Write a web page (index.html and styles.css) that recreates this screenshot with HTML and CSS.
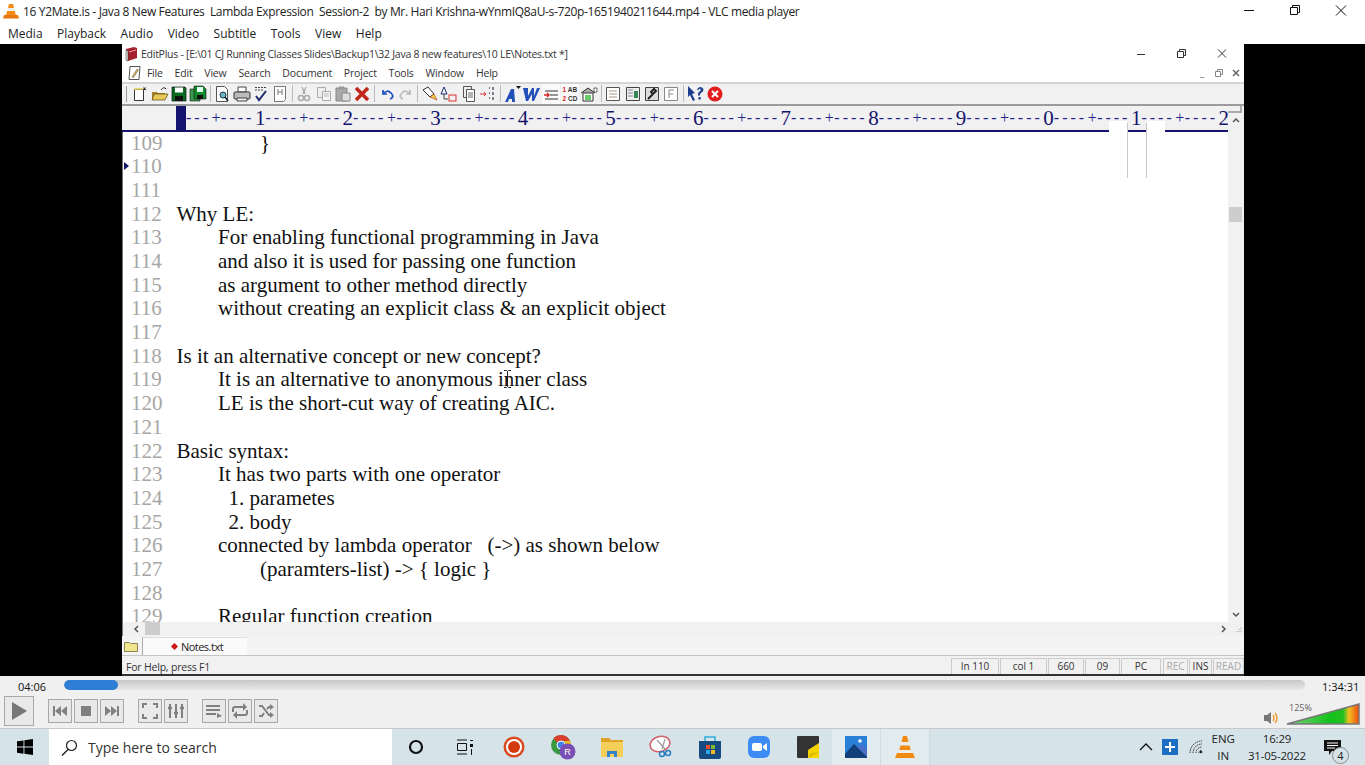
FILE: index.html
```html
<!DOCTYPE html>
<html lang="en">
<head>
<meta charset="UTF-8">
<meta name="viewport" content="width=device-width,initial-scale=1">
<title>VLC media player</title>
<link rel="stylesheet" href="styles.css">
</head>
<body>
<header class="vlc-title">
  <svg class="vlc-cone" width="16" height="16" viewBox="0 0 16 16"><path d="M6 1h4l1 4H5z" fill="#f28c13"/><path d="M5 5h6l.8 3H4.200z" fill="#eee"/><path d="M4.200 8h7.600l1 4H3.200z" fill="#f28c13"/><path d="M1 12h14l1 3.500H0z" fill="#e9780c"/></svg>
  <span class="vlc-title-text">16 Y2Mate.is - Java 8 New Features  Lambda Expression  Session-2  by Mr. Hari Krishna-wYnmIQ8aU-s-720p-1651940211644.mp4 - VLC media player</span>
  <div class="win-btns">
    <svg width="46" height="22" viewBox="0 0 46 22"><path d="M18 10.500h10" stroke="#111" fill="none"/></svg>
    <svg width="46" height="22" viewBox="0 0 46 22"><path d="M18.500 7.500h7v7h-7zM20.500 7.500v-2h7v7h-2" stroke="#111" fill="none"/></svg>
    <svg width="46" height="22" viewBox="0 0 46 22"><path d="M18 5.500l10 10M28 5.500l-10 10" stroke="#111" fill="none"/></svg>
  </div>
</header>
<nav class="vlc-menu">
  <span>Media</span><span>Playback</span><span>Audio</span><span>Video</span><span>Subtitle</span><span>Tools</span><span>View</span><span>Help</span>
</nav>

<main class="video">
  <section class="editplus">
    <div class="ep-title">
      <svg width="14" height="16" viewBox="0 0 14 16"><path d="M2 3l8-2 3 1v10l-9 3-2-1z" fill="#a3202c"/><path d="M2 4l2 1v10l-2-1z" fill="#ddd" stroke="#333" stroke-width=".5"/><path d="M5 6l7-2" stroke="#e9a" fill="none"/></svg>
      <span class="ep-title-text">EditPlus - [E:\01 CJ Running Classes Slides\Backup1\32 Java 8 new features\10 LE\Notes.txt *]</span>
      <div class="ep-win-btns">
        <svg width="40" height="18" viewBox="0 0 40 18"><path d="M15 9.500h8" stroke="#333" fill="none"/></svg>
        <svg width="40" height="18" viewBox="0 0 40 18"><path d="M15.500 6.500h6v6h-6zM17.500 6.500v-2h6v6h-2" stroke="#333" fill="none"/></svg>
        <svg width="40" height="18" viewBox="0 0 40 18"><path d="M16 4.500l8 8M24 4.500l-8 8" stroke="#333" fill="none"/></svg>
      </div>
    </div>
    <div class="ep-menu">
      <svg width="16" height="16" viewBox="0 0 16 16"><path d="M3 1.500h10l-1 13H2z" fill="#fff" stroke="#555"/><path d="M5 12l5-8 1.500 1-5 7.500z" fill="#d9b44a" stroke="#555" stroke-width=".5"/></svg>
      <span>File</span><span>Edit</span><span>View</span><span>Search</span><span>Document</span><span>Project</span><span>Tools</span><span>Window</span><span>Help</span>
      <div class="mdi-btns">
        <span class="mdi-btn">_</span>
        <svg width="14" height="14" viewBox="0 0 14 14"><path d="M3.500 5.500h5v5h-5zM5.500 5.500v-2h5v5h-2" stroke="#888" fill="none"/></svg>
        <svg width="14" height="14" viewBox="0 0 14 14"><path d="M4 4l6 6M10 4l-6 6" stroke="#666" stroke-width="1.500" fill="none"/></svg>
      </div>
    </div>

    <div class="ep-toolbar">
      <i class="grip"></i>
      <svg class="tb" viewBox="0 0 18 18"><path d="M3.500 4.500h9v11h-9z" fill="#fff" stroke="#333"/><path d="M3 4h9" stroke="#e6d85a" stroke-width="1.500"/><path d="M12 1l1 2 2-1-1 2 2 1h-3z" fill="#222"/></svg>
      <svg class="tb" viewBox="0 0 18 18"><path d="M1 7h5l1 1h7v7H1z" fill="#a8862a"/><path d="M3 9h14l-3 6H1z" fill="#e8c95a" stroke="#54430f" stroke-width=".7"/><path d="M10 5q3-4 5-1" stroke="#222" fill="none"/></svg>
      <svg class="tb" viewBox="0 0 18 18"><path d="M2 2h13l1 1v13H2z" fill="#0a6b22" stroke="#111" stroke-width=".7"/><path d="M5 2.500h8v5H5z" fill="#fff"/><path d="M5 11h8v5H5z" fill="#111"/></svg>
      <svg class="tb" viewBox="0 0 18 18"><path d="M1 4h10v12H1z" fill="#3c9a4f" stroke="#111" stroke-width=".6"/><path d="M5 1h9l3 3v10H5z" fill="#128a2e" stroke="#111" stroke-width=".6"/><path d="M8 2h6v5H8z" fill="#dfe"/><path d="M8 10h6v4H8z" fill="#111"/></svg>
      <i class="sep"></i>
      <svg class="tb" viewBox="0 0 18 18"><path d="M3.500 1.500h8l3 3v12h-11z" fill="#fff" stroke="#555"/><circle cx="10" cy="10" r="3" fill="#6fb8c9" stroke="#234"/><path d="M12 12l3 4" stroke="#123" stroke-width="1.500"/></svg>
      <svg class="tb" viewBox="0 0 18 18"><path d="M5 2h8v5H5z" fill="#fff" stroke="#444"/><path d="M2 7h14q1 0 1 1v5q0 1-1 1H2q-1 0-1-1V8q0-1 1-1z" fill="#bbb" stroke="#333"/><path d="M4 13h10v3H4z" fill="#eee" stroke="#444"/></svg>
      <svg class="tb" viewBox="0 0 18 18"><path d="M4 11l3 4 7-9" stroke="#1d2a6b" stroke-width="2" fill="none"/><path d="M3 2.500h12M3 5h9" stroke="#444" stroke-dasharray="2 1"/></svg>
      <svg class="tb" viewBox="0 0 18 18"><path d="M3.500 1.500h11v13l-2 2h-9z" fill="#fff" stroke="#777"/><path d="M7 4v6M11 4v6M7 7h4" stroke="#777"/></svg>
      <i class="sep"></i>
      <svg class="tb" viewBox="0 0 18 18"><path d="M7 2l3 7M11 2L8 9" stroke="#999"/><circle cx="6" cy="13" r="2.500" fill="none" stroke="#aaa" stroke-width="1.500"/><circle cx="12" cy="13" r="2.500" fill="none" stroke="#aaa" stroke-width="1.500"/></svg>
      <svg class="tb" viewBox="0 0 18 18"><path d="M2.500 2.500h8v10h-8z" fill="#eee" stroke="#aaa"/><path d="M7.500 6.500h8v9h-8z" fill="#f4f4f4" stroke="#aaa"/><path d="M9 9h5M9 11h5" stroke="#bbb"/></svg>
      <svg class="tb" viewBox="0 0 18 18"><path d="M2 3h11v13H2z" fill="#aaa" stroke="#888"/><path d="M5 1.500h5v3H5z" fill="#999"/><path d="M8 8h8v8H8z" fill="#ddd" stroke="#888"/></svg>
      <svg class="tb" viewBox="0 0 18 18"><path d="M3 3l12 12M15 3L3 15" stroke="#c0271a" stroke-width="3.500"/></svg>
      <i class="sep"></i>
      <svg class="tb" viewBox="0 0 18 18"><path d="M5 9q4-5 8-1t-1 6M5 5v4h4" stroke="#1c4fc0" stroke-width="1.700" fill="none"/></svg>
      <svg class="tb" viewBox="0 0 18 18"><path d="M13 9Q9 4 5 8t1 6M13 5v4H9" stroke="#bbb" stroke-width="1.700" fill="none"/></svg>
      <i class="sep"></i>
      <svg class="tb" viewBox="0 0 18 18"><path d="M2 5l5-3 6 7-4 3z" fill="#fff" stroke="#333"/><path d="M9 12l4-3 3 6z" fill="#f3d23a" stroke="#a22" stroke-width=".6"/></svg>
      <svg class="tb" viewBox="0 0 18 18"><path d="M4 2l3 7H1z" fill="none" stroke="#1b2f7a"/><path d="M4 9v5h4" stroke="#444" fill="none"/><rect x="9" y="10" width="7" height="6" fill="none" stroke="#d33"/></svg>
      <svg class="tb" viewBox="0 0 18 18"><path d="M3.500 1.500h8v11h-8z" fill="#eee" stroke="#555"/><path d="M6.500 4.500h8v12h-8z" fill="#fff" stroke="#555"/><path d="M8 8h5M8 10h5M8 12h5" stroke="#666"/></svg>
      <svg class="tb" viewBox="0 0 18 18"><path d="M1 9h6M5 7l2 2-2 2" stroke="#d33" fill="none"/><path d="M10 3h1M10 8h1M10 13h1M14 2v3M14 7v3M14 12v3" stroke="#445" stroke-width="1.300"/></svg>
      <i class="sep"></i>
      <svg class="tb" viewBox="0 0 18 18"><path d="M2 17L8 4h3l1 13h-3v-3H6l-1 3z" fill="#2350b8"/><path d="M13 1h5l-2.500 3z" fill="#111"/></svg>
      <svg class="tb" viewBox="0 0 18 18"><path d="M1 3h5l0 8 4-8h2l0 8 3-8h3l-6 13h-2l0-7-4 7H4z" fill="#2350b8"/></svg>
      <div class="tb-on"><svg class="tb" viewBox="0 0 18 18"><path d="M3 6h13M8 10h8M3 14h13" stroke="#333" fill="none"/><path d="M2 10h5M5 8l2 2-2 2" stroke="#d22" stroke-width="1.400" fill="none"/></svg></div>
      <div class="tb-on"><span class="tb-lines"><span><b class="red">1</b> AB</span><span><b class="red">2</b> CD</span></span></div>
      <svg class="tb" viewBox="0 0 18 18"><path d="M1 8l7-5 7 5" fill="#aaa" stroke="#333"/><path d="M3 8h10v8H3z" fill="#fff" stroke="#333"/><path d="M5 10h6v5H5z" fill="#6c6"/><path d="M14 3h3v4h-3z" fill="#fff" stroke="#333" stroke-width=".7"/></svg>
      <i class="sep"></i>
      <svg class="tb" viewBox="0 0 18 18"><path d="M2.500 2.500h13v13h-13z" fill="#fff" stroke="#555"/><path d="M5 6h8M5 9h8M5 12h8" stroke="#a98"/></svg>
      <svg class="tb" viewBox="0 0 18 18"><path d="M2.500 2.500h13v13h-13z" fill="#eee" stroke="#444"/><path d="M4 5h5M4 8h5M4 11h5" stroke="#889"/><path d="M10 6h4v7h-4z" fill="#385"/></svg>
      <svg class="tb" viewBox="0 0 18 18"><path d="M2.500 2.500h13v13h-13z" fill="#ddd" stroke="#444"/><path d="M5 14l8-8-2-2-3 3 2 2" stroke="#222" stroke-width="2" fill="none"/></svg>
      <svg class="tb" viewBox="0 0 18 18"><path d="M2.500 2.500h13v13h-13z" fill="#fff" stroke="#888"/><path d="M7 13V5h5M7 9h4" stroke="#888" fill="none"/></svg>
      <i class="sep"></i>
      <svg class="tb" viewBox="0 0 18 18"><path d="M1 1l7 7-3 1 3 6-2 1-3-6-2 2z" fill="#1c3d8f"/><path d="M10 5q1-3 3.500-3t3 2.500q0 2-2 3t-1.500 3h-2q-.5-3 1.500-4t1-2.500q-1-1-2 1zM11.500 12h2.200v2.500h-2.200z" fill="#1c3d8f"/></svg>
      <svg class="tb" viewBox="0 0 18 18"><circle cx="9" cy="9" r="7.500" fill="#e11f1f"/><path d="M6 6l6 6M12 6l-6 6" stroke="#fff" stroke-width="2"/></svg>
    </div>

    <div class="ep-pane">
      <div class="ep-main">
        <div class="ruler">
          <span class="ruler-cursor"></span>
          <div class="ruler-seg first"><i>---</i><b>+</b><i>----</i><em>1</em></div>
          <div class="ruler-seg"><i>----</i><b>+</b><i>----</i><em>2</em></div>
          <div class="ruler-seg"><i>----</i><b>+</b><i>----</i><em>3</em></div>
          <div class="ruler-seg"><i>----</i><b>+</b><i>----</i><em>4</em></div>
          <div class="ruler-seg"><i>----</i><b>+</b><i>----</i><em>5</em></div>
          <div class="ruler-seg"><i>----</i><b>+</b><i>----</i><em>6</em></div>
          <div class="ruler-seg"><i>----</i><b>+</b><i>----</i><em>7</em></div>
          <div class="ruler-seg"><i>----</i><b>+</b><i>----</i><em>8</em></div>
          <div class="ruler-seg"><i>----</i><b>+</b><i>----</i><em>9</em></div>
          <div class="ruler-seg"><i>----</i><b>+</b><i>----</i><em>0</em></div>
          <div class="ruler-seg"><i>----</i><b>+</b><i>----</i><em>1</em></div>
          <div class="ruler-seg"><i>----</i><b>+</b><i>----</i><em>2</em></div>
        </div>
        <span class="ruler-gap one"></span>
        <span class="ruler-gap two"></span>
        <span class="col-mark one"></span>
        <span class="col-mark two"></span>
        <div class="editor">
          <div class="line"><span class="num">109</span><span class="code in-3">}</span></div>
          <div class="line current"><span class="num">110</span><span class="code"></span></div>
          <div class="line"><span class="num">111</span><span class="code"></span></div>
          <div class="line"><span class="num">112</span><span class="code">Why LE:</span></div>
          <div class="line"><span class="num">113</span><span class="code in-1">For enabling functional programming in Java</span></div>
          <div class="line"><span class="num">114</span><span class="code in-1">and also it is used for passing one function</span></div>
          <div class="line"><span class="num">115</span><span class="code in-1">as argument to other method directly</span></div>
          <div class="line"><span class="num">116</span><span class="code in-1">without creating an explicit class &amp; an explicit object</span></div>
          <div class="line"><span class="num">117</span><span class="code"></span></div>
          <div class="line"><span class="num">118</span><span class="code">Is it an alternative concept or new concept?</span></div>
          <div class="line"><span class="num">119</span><span class="code in-1">It is an alternative to anonymous inner class</span></div>
          <div class="line"><span class="num">120</span><span class="code in-1">LE is the short-cut way of creating AIC.</span></div>
          <div class="line"><span class="num">121</span><span class="code"></span></div>
          <div class="line"><span class="num">122</span><span class="code">Basic syntax:</span></div>
          <div class="line"><span class="num">123</span><span class="code in-1">It has two parts with one operator</span></div>
          <div class="line"><span class="num">124</span><span class="code in-2">1. parametes</span></div>
          <div class="line"><span class="num">125</span><span class="code in-2">2. body</span></div>
          <div class="line"><span class="num">126</span><span class="code in-1">connected by lambda operator   (-&gt;) as shown below</span></div>
          <div class="line"><span class="num">127</span><span class="code in-3">(paramters-list) -&gt; { logic }</span></div>
          <div class="line"><span class="num">128</span><span class="code"></span></div>
          <div class="line"><span class="num">129</span><span class="code in-1">Regular function creation</span></div>
          <svg class="ibeam" width="9" height="18" viewBox="0 0 9 18"><path d="M1 .5h2.500l1 1 1-1H8M4.500 1.500v15M1 17.500h2.500l1-1 1 1H8" stroke="#222" fill="none"/></svg>
        </div>
      </div>
      <div class="vscroll">
        <span class="vcap"></span>
        <svg class="arrow" width="16" height="14" viewBox="0 0 16 14"><path d="M5 9l3-3 3 3" stroke="#555" stroke-width="1.500" fill="none"/></svg>
        <div class="vtrack"><span class="vthumb"></span></div>
        <svg class="arrow" width="16" height="14" viewBox="0 0 16 14"><path d="M5 5l3 3 3-3" stroke="#555" stroke-width="1.500" fill="none"/></svg>
      </div>
    </div>

    <div class="hscroll">
      <svg width="14" height="14" viewBox="0 0 14 14"><path d="M8 4L5 7l3 3" stroke="#555" stroke-width="1.500" fill="none"/></svg>
      <span class="hthumb"></span>
      <svg class="hright" width="14" height="14" viewBox="0 0 14 14"><path d="M6 4l3 3-3 3" stroke="#555" stroke-width="1.500" fill="none"/></svg>
      <svg width="14" height="14" viewBox="0 0 14 14"><path d="M11 5v1M9 7v1M11 7v1M7 9v1M9 9v1M11 9v1" stroke="#aaa"/></svg>
    </div>
    <div class="ep-tabs">
      <svg width="14" height="12" viewBox="0 0 14 12"><path d="M.5 2.500h5l1 1h7v8H.5z" fill="#efe58c" stroke="#8a8450"/></svg>
      <div class="ep-tab"><span class="diamond"></span>Notes.txt</div>
    </div>
    <footer class="ep-status">
      <span class="ep-help">For Help, press F1</span>
      <span class="cell w-48">In 110</span>
      <span class="cell w-47">col 1</span>
      <span class="cell w-36">660</span>
      <span class="cell w-35">09</span>
      <span class="cell w-40">PC</span>
      <span class="cell w-25 off">REC</span>
      <span class="cell w-23">INS</span>
      <span class="cell w-30 off">READ</span>
    </footer>
  </section>
</main>

<section class="seek-row">
  <span class="time">04:06</span>
  <div class="seek"><span class="seek-fill"></span></div>
  <span class="time total">1:34:31</span>
</section>

<section class="controls">
  <button class="btn play"><svg width="20" height="20" viewBox="0 0 20 20"><path d="M3 1l15 9-15 9z" fill="#777"/></svg></button>
  <div class="btn-group first">
    <button class="btn"><svg width="18" height="14" viewBox="0 0 18 14"><path d="M2 2h2v10H2zM10 2v10L4 7zM16 2v10l-6-5z" fill="#808080"/></svg></button>
    <button class="btn"><svg width="14" height="14" viewBox="0 0 14 14"><path d="M2 2h10v10H2z" fill="#808080"/></svg></button>
    <button class="btn"><svg width="18" height="14" viewBox="0 0 18 14"><path d="M2 2l6 5-6 5zM8 2l6 5-6 5zM14 2h2v10h-2z" fill="#808080"/></svg></button>
  </div>
  <div class="btn-group">
    <button class="btn"><svg width="16" height="16" viewBox="0 0 16 16"><path d="M1 5V1h4M11 1h4v4M15 11v4h-4M5 15H1v-4" stroke="#808080" stroke-width="2" fill="none"/></svg></button>
    <button class="btn"><svg width="18" height="16" viewBox="0 0 18 16"><path d="M3 1v14M9 1v14M15 1v14" stroke="#808080" stroke-width="2"/><path d="M1 5h4M7 10h4M13 5h4" stroke="#808080" stroke-width="2.500"/></svg></button>
  </div>
  <div class="btn-group">
    <button class="btn"><svg width="16" height="14" viewBox="0 0 16 14"><path d="M0 2h14M0 6h14M0 10h10" stroke="#808080" stroke-width="2"/><path d="M11 9l5 3-5 2z" fill="#808080"/></svg></button>
    <button class="btn"><svg width="18" height="16" viewBox="0 0 18 16"><path d="M2 9V6q0-2 2-2h9M16 7v3q0 2-2 2H5" stroke="#808080" stroke-width="2" fill="none"/><path d="M12 0l4 4-4 4zM6 8l-4 4 4 4z" fill="#808080"/></svg></button>
    <button class="btn"><svg width="16" height="14" viewBox="0 0 16 14"><path d="M1 2h3l7 9h2M1 12h3l2-3M9 5l2-2h2" stroke="#808080" stroke-width="2" fill="none"/><path d="M12 0l4 3-4 3zM12 8l4 3-4 3z" fill="#808080"/></svg></button>
  </div>
  <div class="volume">
    <svg width="16" height="14" viewBox="0 0 16 14"><path d="M0 4h3l4-3v12l-4-3H0z" fill="#777"/><path d="M9 4q2 3 0 6M11 2q4 5 0 10" stroke="#f0961e" stroke-width="1.300" fill="none"/></svg>
    <div class="vol-bar">
      <svg width="74" height="22" viewBox="0 0 74 22"><defs><linearGradient id="vol" x1="0" x2="1" y1="0" y2="0"><stop offset="0" stop-color="#7ed07a"/><stop offset=".6" stop-color="#12c21c"/><stop offset=".78" stop-color="#22c020"/><stop offset=".86" stop-color="#f0c020"/><stop offset="1" stop-color="#f04a10"/></linearGradient></defs><path d="M1 21L73 1v20z" fill="url(#vol)" stroke="#777" stroke-width="1.500"/></svg>
      <span class="vol-label">125%</span>
    </div>
  </div>
</section>

<footer class="taskbar">
  <div class="start"><svg width="16" height="16" viewBox="0 0 16 16"><path d="M0 2.300l6.500-.9v6.200H0zM7.400 1.300L16 0v7.600H7.400zM0 8.500h6.500v6.200L0 13.800zM7.400 8.500H16V16l-8.600-1.200z" fill="#000"/></svg></div>
  <div class="search">
    <svg width="17" height="17" viewBox="0 0 17 17"><circle cx="10.500" cy="6.500" r="5" fill="none" stroke="#222" stroke-width="1.200"/><path d="M7 10.500L1 16.500" stroke="#222" stroke-width="1.400"/></svg>
    <span>Type here to search</span>
  </div>
  <div class="task-icons">
    <span class="task"><svg width="16" height="16" viewBox="0 0 16 16"><circle cx="8" cy="8" r="6" fill="none" stroke="#111" stroke-width="2.200"/></svg></span>
    <span class="task"><svg width="18" height="16" viewBox="0 0 18 16"><path d="M1 1h10M1 15h10M1.500 4.500h9v7h-9z" stroke="#111" fill="none"/><path d="M14 1h3v1h-3zM14 5h3v3h-3z" fill="#111"/><path d="M15.500 10v6" stroke="#111"/></svg></span>
    <span class="task"><svg width="22" height="22" viewBox="0 0 22 22"><circle cx="11" cy="11" r="10.500" fill="#d94a1e"/><circle cx="11" cy="11" r="8" fill="#fff"/><circle cx="11" cy="11" r="6" fill="#d33a10"/></svg></span>
    <span class="task"><svg width="26" height="26" viewBox="0 0 26 26"><circle cx="11" cy="11" r="10" fill="#3a9a45"/><path d="M11 1a10 10 0 0 1 9 6H11a4 4 0 0 0-4 2L3.500 4A10 10 0 0 1 11 1z" fill="#d9402e"/><path d="M20 7a10 10 0 0 1-9 14l4-9a4 4 0 0 0-1-5z" fill="#f3c01a"/><circle cx="11" cy="11" r="4" fill="#3f83e8" stroke="#fff"/><circle cx="17.500" cy="17.500" r="8" fill="#7a4fb5"/><text x="17.500" y="21" class="badge-r">R</text></svg></span>
    <span class="task"><svg width="22" height="20" viewBox="0 0 22 20"><path d="M0 1h8l2 2h12v4H0z" fill="#e0a526"/><path d="M0 5h22v15H0z" fill="#f6cf5a"/><path d="M6 14h10v6H6z" fill="#2f84cc"/><path d="M9 17h4v3H9z" fill="#f6cf5a"/></svg></span>
    <span class="task"><svg width="24" height="24" viewBox="0 0 24 24"><ellipse cx="11" cy="9" rx="10" ry="7.500" transform="rotate(-15 11 9)" fill="#fff" stroke="#d0606a" stroke-width="1.500"/><path d="M8 5l8 9M16 4l-3 10" stroke="#999" stroke-width="1.200"/><circle cx="13" cy="19" r="2.500" fill="none" stroke="#2b7fc4" stroke-width="1.500"/><circle cx="19" cy="18" r="2.500" fill="none" stroke="#2b7fc4" stroke-width="1.500"/></svg></span>
    <span class="task"><svg width="22" height="24" viewBox="0 0 22 24"><path d="M6 6V2h10v4" fill="none" stroke="#2dabd9" stroke-width="1.500"/><path d="M0 6h22v16q0 2-2 2H2q-2 0-2-2z" fill="#174a80"/><path d="M7 10h4v4H7z" fill="#e8502a"/><path d="M12 10h4v4h-4z" fill="#7dba2f"/><path d="M7 15h4v4H7z" fill="#2da5e8"/><path d="M12 15h4v4h-4z" fill="#f6b81c"/></svg></span>
    <span class="task"><svg width="22" height="22" viewBox="0 0 22 22"><rect width="22" height="22" rx="6" fill="#3d8cf5"/><rect x="4" y="7" width="10" height="8" rx="2" fill="#fff"/><path d="M15 10l4-3v8l-4-3z" fill="#fff"/></svg></span>
    <span class="task"><svg width="22" height="22" viewBox="0 0 22 22"><rect width="22" height="22" rx="1" fill="#333"/><path d="M11 22v-8l11-7v15z" fill="#f5d400"/><path d="M11 22l3-5 8-1z" fill="#a89200" opacity=".4"/></svg></span>
    <span class="task active"><svg width="22" height="22" viewBox="0 0 22 22"><rect width="22" height="22" fill="#2a7fd6"/><path d="M0 18l9-10 13 12v2H0z" fill="#123f78"/><path d="M12 11l5-3 5 5v8z" fill="#4a6fc8"/><circle cx="15" cy="5" r="1.800" fill="#fff"/></svg></span>
    <span class="task active"><svg width="20" height="22" viewBox="0 0 20 22"><path d="M8 0h4l1.500 6h-7z" fill="#f08a10"/><path d="M6.500 6h7l1 3.500h-9z" fill="#eee"/><path d="M5.500 9.500h9l1.200 4.500H4.300z" fill="#f08a10"/><path d="M4.300 14h11.400l.8 3H3.500z" fill="#eee"/><path d="M2 17h16l2 5H0z" fill="#f08a10"/></svg></span>
  </div>
  <div class="tray">
    <svg class="tray-up" width="14" height="8" viewBox="0 0 14 8"><path d="M1 7l6-6 6 6" stroke="#111" stroke-width="1.300" fill="none"/></svg>
    <span class="tray-plus"><svg width="16" height="16" viewBox="0 0 16 16"><path d="M0 0h16v16H0z" fill="#1b6ec2"/><path d="M8 3v10M3 8h10" stroke="#fff" stroke-width="2"/></svg></span>
    <svg class="tray-wifi" width="14" height="14" viewBox="0 0 14 14"><path d="M1 13A12 12 0 0 1 13 1M4 13a9 9 0 0 1 9-9M7 13a6 6 0 0 1 6-6M10 13a3 3 0 0 1 3-3" stroke="#333" fill="none" stroke-dasharray="1.500 .7"/><circle cx="12" cy="12" r="1.300" fill="#222"/></svg>
    <div class="lang"><span>ENG</span><span>IN</span></div>
    <div class="clock"><span>16:29</span><span>31-05-2022</span></div>
    <div class="notif">
      <svg width="17" height="15" viewBox="0 0 17 15"><path d="M0 0h17v11H8l-3 4v-4H0z" fill="#111"/><path d="M3 3h11M3 5.500h11M3 8h8" stroke="#fff"/></svg>
      <span class="notif-count">4</span>
    </div>
  </div>
</footer>
</body>
</html>
```

FILE: styles.css
```css
:root {
  --ui-font: "Open Sans", "Noto Sans", sans-serif;
  --serif: "Liberation Serif", serif;
  --navy: #14146e;
  --panel: #f0f0f0;
  --ep-grey: #f1f1f1;
}
* { box-sizing: border-box; }
html, body { height: 100%; }
body {
  margin: 0; width: 1365px; height: 765px; overflow: hidden;
  display: flex; flex-direction: column;
  font-family: var(--ui-font); color: #222; background: #fff;
}

/* vlc chrome */
.vlc-title { height: 22px; display: flex; align-items: center; padding-left: 3px; background: #fff; position: relative; }
.vlc-cone { flex: none; }
.vlc-title-text { margin-left: 4px; font-size: 12px; white-space: pre; letter-spacing: -0.35px; }
.win-btns { margin-left: auto; display: flex; padding-right: 1px; }
.vlc-menu { height: 22px; display: flex; gap: 14.500px; align-items: center; padding-left: 8px; font-size: 12px; background: #fff; }

.video { height: 632px; background: #000; display: flex; padding-left: 122px; }

/* editplus */
.editplus { width: 1122px; display: flex; flex-direction: column; background: var(--ep-grey); font-size: 11px; }
.ep-title { height: 20px; display: flex; align-items: center; gap: 3px; padding-left: 2px; background: #fff; }
.ep-title-text { font-size: 10.500px; letter-spacing: -0.26px; color: #333; }
.ep-win-btns { margin-left: auto; display: flex; padding-right: 2px; }
.ep-menu { height: 18px; display: flex; align-items: center; gap: 11.900px; padding-left: 5px; background: #fff; font-size: 10.500px; letter-spacing: -0.2px; color: #333; }
.ep-menu svg:first-child { margin-right: -8px; }
.mdi-btns { margin-left: auto; display: flex; align-items: center; gap: 3px; padding-right: 1px; }
.mdi-btn { width: 14px; height: 14px; font-size: 10px; line-height: 12px; text-align: center; color: #777; }
.ep-toolbar { height: 24px; display: flex; align-items: center; gap: 1.300px; padding-left: 4px; background: var(--ep-grey); border-top: 2px solid #d4d4d4; border-bottom: 2px solid #9c9c9c; }
.grip { width: 2px; height: 16px; border-left: 1px solid #999; margin-right: 2px; }
.sep { width: 1px; height: 17px; background: #bbb; margin: 0 1.300px; }
.tb { width: 18px; height: 18px; flex: none; }
.tb-on { width: 18px; height: 20px; flex: none; background: #fafafa; display: flex; align-items: center; justify-content: center; }
.tb-lines { display: flex; flex-direction: column; font: bold 6.500px/9px "Liberation Sans", sans-serif; color: #333; white-space: nowrap; }
.red { color: #d22; }

.ep-pane { height: 516px; display: flex; }
.ep-main { flex: 1; min-width: 0; display: flex; flex-direction: column; position: relative; }
.ruler { height: 26px; flex: none; position: relative; overflow: hidden; display: flex; align-items: center; padding-left: 54px; font: 21px var(--serif); color: #23238c; background: var(--ep-grey); border-bottom: 2px solid var(--navy); }
.ruler-cursor { width: 10px; height: 24px; background: var(--navy); flex: none; }
.ruler-seg { width: 87.600px; flex: none; display: flex; justify-content: space-between; align-items: center; line-height: 20px; }
.ruler-seg.first { width: 79.500px; }
.ruler-seg i { font-style: normal; font-size: 16px; letter-spacing: 3px; white-space: nowrap; }
.ruler-seg b { font-weight: 400; font-size: 16px; }
.ruler-seg em { font-style: normal; color: var(--navy); }
.ruler-gap { position: absolute; top: 15px; height: 11px; width: 18px; background: #fff; z-index: 1; }
.ruler-gap.one { left: 987px; }
.ruler-gap.two { left: 1025px; }
.col-mark { position: absolute; top: 17px; width: 1px; height: 55px; background: #c8c8c8; z-index: 2; }
.col-mark.one { left: 1005px; }
.col-mark.two { left: 1024px; }

.editor { flex: 1; min-height: 0; overflow: hidden; background: #fff; position: relative; border-left: 1px solid #777; }
.line { height: 23.700px; display: flex; font: 21px/23.700px var(--serif); position: relative; }
.num { width: 53.500px; padding-left: 8px; color: #a6a6a6; flex: none; }
.code { color: #111; white-space: pre; }
.in-1 { padding-left: 41.500px; }
.in-2 { padding-left: 52px; }
.in-3 { padding-left: 83.500px; }
.current::before { content: ""; position: absolute; left: 1px; top: 7px; border-left: 5px solid var(--navy); border-top: 4px solid transparent; border-bottom: 4px solid transparent; }
.ibeam { position: absolute; left: 380px; top: 238px; }

.vscroll { width: 16px; flex: none; display: flex; flex-direction: column; background: var(--ep-grey); }
.vcap { height: 7px; flex: none; width: 14px; border-right: 2px solid #aaa; border-bottom: 2px solid #aaa; }
.arrow { flex: none; }
.vtrack { flex: 1; padding-top: 80px; }
.vthumb { display: block; width: 13px; height: 15px; margin-left: 1px; background: #cdcdcd; }

.hscroll { height: 15px; display: flex; align-items: center; background: var(--ep-grey); border-left: 1px solid #777; padding-left: 7px; }
.hthumb { width: 15px; height: 13px; background: #cdcdcd; margin-left: 1px; }
.hright { margin-left: auto; }
.ep-tabs { height: 20px; display: flex; align-items: center; gap: 4px; padding-left: 2px; background: #f4f4f4; border-bottom: 1px solid #c4c4c4; }
.ep-tab { width: 105px; height: 18px; display: flex; align-items: center; justify-content: center; gap: 3px; padding-left: 5px; background: #fafafa; border-left: 1px solid #aaa; border-top: 1px solid #ddd; font-size: 11px; letter-spacing: -0.5px; }
.diamond { width: 5px; height: 5px; background: #d01818; transform: rotate(45deg); margin-right: 1px; }
.ep-status { height: 20px; display: flex; align-items: flex-end; padding-left: 4px; background: var(--ep-grey); border-bottom: 2px solid #333; font-size: 10px; }
.ep-help { margin-right: auto; font-size: 10.500px; letter-spacing: -0.2px; color: #333; }
.cell { height: 16px; line-height: 15px; text-align: center; border: 1px solid #ccc; border-bottom: 0; margin-right: 1px; color: #333; }
.cell.off { color: #aaa; }
.w-48 { width: 48px; }
.w-47 { width: 47px; }
.w-36 { width: 36px; }
.w-35 { width: 35px; }
.w-40 { width: 40px; margin-right: 2px; }
.w-25 { width: 25px; }
.w-23 { width: 23px; }
.w-30 { width: 31px; margin-right: 0; }

/* seek + controls */
.seek-row { height: 20px; display: flex; align-items: center; background: var(--panel); }
.time { font-size: 11px; width: 64px; padding-left: 18px; color: #111; }
.time.total { width: 60px; padding-left: 17px; }
.seek { width: 1241px; height: 10px; margin-top: -2px; border-radius: 5px; background: linear-gradient(#c8c8c8, #e8e8e8); overflow: hidden; }
.seek-fill { display: block; width: 54px; height: 100%; border-radius: 5px; background: #2d7ed4; }
.controls { height: 33px; display: flex; align-items: center; padding: 0 0 2px 4px; background: var(--panel); border-bottom: 1px solid #c8c8c8; }
.btn { width: 24px; height: 24px; padding: 0; display: flex; align-items: center; justify-content: center; background: #e9e9e9; border: 1px solid #a8a8a8; }
.btn.play { width: 30px; height: 30px; }
.btn-group { display: flex; gap: 2px; margin-left: 14px; }
.volume { margin-left: auto; display: flex; align-items: flex-end; gap: 6px; padding-right: 5px; padding-top: 5px; }
.vol-bar { position: relative; height: 22px; }
.vol-label { position: absolute; left: 3px; top: -2px; font-size: 9px; color: #666; }

/* windows taskbar */
.taskbar { height: 36px; display: flex; align-items: center; background: #d6e4ea; }
.start { width: 49px; height: 100%; display: flex; align-items: center; justify-content: center; }
.search { width: 343px; height: 100%; background: #fff; display: flex; align-items: center; gap: 10px; padding-left: 12px; font-size: 14px; color: #333; }
.task-icons { display: flex; height: 100%; align-items: center; margin-left: -1px; }
.task { width: 49px; height: 100%; display: flex; align-items: center; justify-content: center; }
.task.active { background: #e2ecef; border-right: 1px solid #d0dce0; }
.tray { margin-left: auto; display: flex; align-items: center; height: 100%; padding-right: 9px; font-size: 11.500px; color: #222; }
.tray-up { margin-right: 9px; }
.tray-plus { display: flex; margin-right: 11px; }
.tray-wifi { margin-right: 9px; }
.lang, .clock { display: flex; flex-direction: column; align-items: center; line-height: 17px; }
.lang { margin-right: 13px; }
.clock { margin-right: 18px; letter-spacing: -0.2px; }
.notif { position: relative; width: 32px; height: 100%; display: flex; align-items: center; }
.notif-count { position: absolute; left: 8px; top: 18px; width: 17px; height: 17px; border-radius: 50%; border: 1px solid #888; background: #d6e4ea; font-size: 11px; line-height: 15px; text-align: center; }
.badge-r { font: 9px "Liberation Sans", sans-serif; fill: #fff; text-anchor: middle; }
```
